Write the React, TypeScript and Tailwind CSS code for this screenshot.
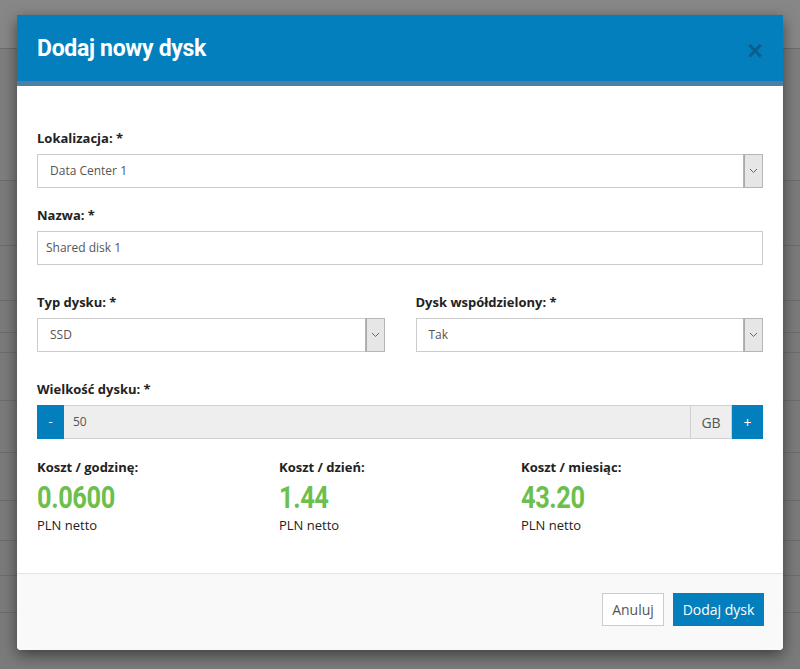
import React from "react";

const Chevron = () => (
  <svg width="9" height="6" viewBox="0 0 9 6" fill="none">
    <path d="M1 1l3.5 3.5L8 1" stroke="#666" strokeWidth="1" />
  </svg>
);

function Select({ value }: { value: string }) {
  return (
    <div className="flex h-[34px] w-full border border-[#cccccc] bg-white">
      <div className="flex flex-1 items-center pl-[12px] text-[12px] text-[#555]">{value}</div>
      <div className="flex w-[18px] items-center justify-center border-l border-[#aaaaaa] bg-[#e6e6e6] outline outline-1 outline-[#b5b5b5]">
        <Chevron />
      </div>
    </div>
  );
}

function Label({ children }: { children: React.ReactNode }) {
  return <div className="mb-[7px] text-[13px] font-bold leading-[18px] text-[#222]">{children}</div>;
}

function Cost({ label, value }: { label: string; value: string }) {
  return (
    <div className="flex flex-col">
      <div className="text-[13px] font-bold leading-[18px] text-[#222]">{label}</div>
      <div
        className="mt-[4px] origin-left scale-x-[0.82] text-[31px] font-bold leading-[36px] tracking-[-0.5px] text-[#6cbf4f]"
        style={{ fontFamily: "Roboto, 'Open Sans', sans-serif" }}
      >
        {value}
      </div>
      <div className="mt-[2px] text-[13px] leading-[14px] text-[#222]">PLN netto</div>
    </div>
  );
}

export default function App() {
  const lines = [48, 180, 245, 300, 332, 352, 400, 452, 500, 540, 575, 612];
  return (
    <div className="relative h-[669px] w-[800px] overflow-hidden bg-[#7b7b7b]" style={{ fontFamily: "'Open Sans', sans-serif" }}>
      <div className="absolute inset-x-0 top-0 h-[48px] bg-[#878787]" />
      <div className="absolute inset-x-0 top-[48px] h-[132px] bg-[#7e7e7e]" />
      {lines.map((y) => (
        <div key={y} className="absolute inset-x-0 h-px bg-[#6c6c6c]" style={{ top: y }} />
      ))}
      <div className="relative pl-[17px] pt-[15px]">
        <div className="flex h-[635px] w-[766px] flex-col overflow-hidden rounded-b-[4px] bg-white shadow-[0_5px_15px_rgba(0,0,0,0.5)]">
          <div className="flex h-[66px] items-center justify-between bg-[#037fbe] pl-[20px] pr-[20px]">
            <div className="pt-[2px] text-[23px] font-bold tracking-[-0.3px] text-white" style={{ fontFamily: "Roboto, sans-serif" }}>
              Dodaj nowy dysk
            </div>
            <div className="pt-[6px] text-[27px] font-bold leading-none text-[#0b5f8e]" style={{ fontFamily: "'Liberation Sans', sans-serif" }}>
              ×
            </div>
          </div>
          <div className="h-[5px] bg-[#4f7ea7]" />
          <div className="flex flex-1 flex-col px-[20px] pt-[43px]">
            <Label>Lokalizacja: *</Label>
            <Select value="Data Center 1" />
            <div className="mt-[18px]">
              <Label>Nazwa: *</Label>
              <div className="flex h-[34px] items-center border border-[#cccccc] bg-white pl-[8px] text-[12px] text-[#555]">Shared disk 1</div>
            </div>
            <div className="mt-[28px] grid grid-cols-2 gap-[31px]">
              <div>
                <Label>Typ dysku: *</Label>
                <Select value="SSD" />
              </div>
              <div>
                <Label>Dysk współdzielony: *</Label>
                <Select value="Tak" />
              </div>
            </div>
            <div className="mt-[28px]">
              <Label>Wielkość dysku: *</Label>
              <div className="flex h-[34px]">
                <div className="flex w-[27px] items-center justify-center bg-[#037fbe] text-[13px] text-white">-</div>
                <div className="flex flex-1 items-center border-y border-[#d0d0d0] bg-[#eeeeee] pl-[9px] text-[12px] text-[#555]">50</div>
                <div className="flex w-[42px] items-center justify-center border border-[#d0d0d0] bg-[#eeeeee] text-[14px] text-[#555]">GB</div>
                <div className="flex w-[31px] items-center justify-center bg-[#037fbe] text-[14px] text-white">+</div>
              </div>
            </div>
            <div className="mt-[19px] grid grid-cols-3">
              <Cost label="Koszt / godzinę:" value="0.0600" />
              <Cost label="Koszt / dzień:" value="1.44" />
              <Cost label="Koszt / miesiąc:" value="43.20" />
            </div>
          </div>
          <div className="flex h-[77px] items-start justify-end gap-[9px] border-t border-[#e5e5e5] bg-[#f9f9f9] pr-[19px] pt-[19px]">
            <button className="h-[33px] w-[62px] border border-[#cccccc] bg-white text-[14px] text-[#555]">Anuluj</button>
            <button className="h-[33px] w-[91px] bg-[#037fbe] text-[14px] text-white">Dodaj dysk</button>
          </div>
        </div>
      </div>
    </div>
  );
}
